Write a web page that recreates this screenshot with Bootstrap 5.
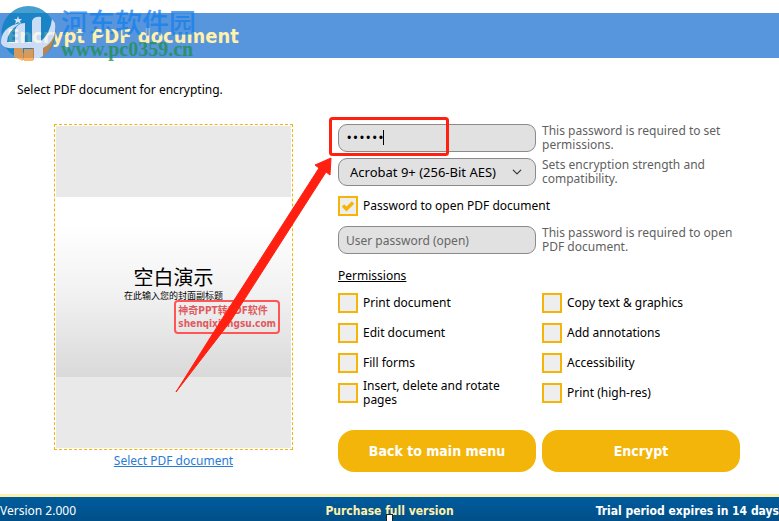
<!DOCTYPE html>
<html lang="en">
<head>
<meta charset="utf-8">
<meta name="viewport" content="width=device-width, initial-scale=1">
<title>Encrypt PDF document</title>
<link href="https://cdn.jsdelivr.net/npm/bootstrap@5.3.0/dist/css/bootstrap.min.css" rel="stylesheet">
<style>
body{font-family:"Noto Sans","Noto Sans CJK SC",sans-serif;font-size:12px;line-height:14px;color:#000;background:#fff}
.title-bar,.action,.stamp,.status .fw-bold,.field[type=password]:not(:placeholder-shown){font-family:"DejaVu Sans Condensed","DejaVu Sans","Noto Sans CJK SC",sans-serif;font-stretch:condensed}
.title-bar{margin-top:13px;height:45px;background:#5795dd;padding-left:7px}
.title-bar h1{font-size:20px;line-height:24px;font-weight:700;color:#fff0ab}
.watermark{left:0;top:-8px;opacity:.75}
.wm-cn{font:500 27px/34px "Noto Sans CJK SC",sans-serif;color:#1480ec}
.wm-url{font:700 20px/20px "Liberation Serif",serif;color:#1c9044}
.intro{padding:25px 17px 27px}
.workspace{display:grid;grid-template-columns:239fr 402fr;column-gap:45px;padding:0 39px 22px 54px}
.preview{border:1px dashed #f4b508;padding:1px;height:326px}
.preview-page{background:#e9e9e9}
.slide{height:180px;background:linear-gradient(#fff 15%,#f1f1f1 55%,#d9d9d9);font-family:"Noto Sans CJK SC",sans-serif}
.slide-title{font-size:20px;line-height:26px;padding-top:67px}
.slide-sub{font-size:9px;line-height:12px}
.stamp{right:12px;top:175px;border:2px solid #ff5555;border-radius:4px;color:#e05a60;font-size:10px;line-height:13px;font-weight:700;padding:2px;white-space:nowrap}
.pick{color:#2a7bd4}
.settings{display:grid;row-gap:6px;align-content:start}
.pair{display:grid;grid-template-columns:1fr 1fr;column-gap:6px}
.field{width:100%;height:28px;border:1px solid #8a8a8a;border-radius:9px;background-color:#e1e1e1;padding:0 7px;font-size:12px;line-height:14px;color:#000}
.field::placeholder{color:#666;opacity:1}
.field.form-select{padding-left:11px;font-size:13px;background-size:10px;background-position:right 13px center}
.hint{color:#5f5f5f}
.tick{appearance:none;flex:none;width:20px;height:20px;margin:0;border:2px solid #f4b508;background:#eee center/16px no-repeat}
.tick:checked{background-image:url("data:image/svg+xml,%3Csvg xmlns='http://www.w3.org/2000/svg' viewBox='0 0 16 16'%3E%3Cpath d='M3 7.500l3.500 3.500L13 4.500' fill='none' stroke='%23f4b508' stroke-width='3.500'/%3E%3C/svg%3E")}
.option{gap:5px;min-height:30px}
.open-option{min-height:28px}
.group-name{font-size:12px;line-height:14px;padding:9px 0 5px}
.actions{padding-top:16px}
.action{height:42px;border:0;border-radius:16px;background:#f4b50b;color:#fff;font-size:14px;font-weight:700}
.status{border-top:3px solid #fff0ab;background:linear-gradient(#005c9d,#004f88);color:#fff;height:27px;padding-top:7px;white-space:nowrap;display:grid;grid-template-columns:1fr auto 1fr}
.buy{color:#fff0ab}
.notes{left:0;top:0;pointer-events:none}
.handle{left:50%;bottom:0;margin-left:-4px;width:7px;height:7px;background:#fff;border:1px solid #222;border-bottom:0}
</style>
<script src="https://cdn.jsdelivr.net/npm/bootstrap@5.3.0/dist/js/bootstrap.bundle.min.js"></script>
</head>
<body>
<div class="d-flex flex-column min-vh-100 overflow-hidden">
<header class="title-bar d-flex align-items-center position-relative">
<h1 class="m-0">Encrypt PDF document</h1>
<div class="watermark position-absolute d-flex" aria-hidden="true">
<svg width="61" height="58" viewBox="0 0 61 58">
<circle cx="28.500" cy="28" r="27" fill="#087fc0"/>
<path d="M13 51Q43 44 55 21Q56 42 43 51Q28 59 13 51Z" fill="#d98022"/>
<path d="M1 38Q1 22 20 18Q7 27 7 37H15V25Q17 18 25 18V37H32V16Q34 11 41 12V36Q50 29 52 14L55 18Q57 36 43 43V51L34 56V43H23V55L14 51V43Q3 44 1 38Z" fill="#f2f6ff"/>
<path d="M14 43H23V56L14 52ZM24 44H33V56H24Z" fill="#ff9c32"/>
<path d="M18 11l1 3h3l-2 2 1 3-3-2-3 2 1-3-2-2h3z" fill="#fff"/>
</svg>
<div><div class="wm-cn">河东软件园</div><div class="wm-url">www.pc0359.cn</div></div>
</div>
</header>
<main class="flex-grow-1 position-relative">
<p class="intro m-0">Select PDF document for encrypting.</p>
<div class="workspace">
<section>
<div class="preview position-relative">
<div class="preview-page h-100 d-flex flex-column justify-content-center"><div class="slide text-center"><div class="slide-title">空白演示</div><div class="slide-sub">在此输入您的封面副标题</div></div></div>
<div class="stamp position-absolute">神奇PPT转PDF软件<br>shenqixiangsu.com</div>
</div>
<div class="text-center pt-1"><a class="pick" href="#">Select PDF document</a></div>
</section>
<form class="settings">
<div class="pair"><input class="field" type="password" value="secret" placeholder="Password" aria-label="Permissions password"><span class="hint">This password is required to set permissions.</span></div>
<div class="pair"><select class="field form-select" aria-label="Encryption strength"><option>Acrobat 9+ (256-Bit AES)</option></select><span class="hint">Sets encryption strength and compatibility.</span></div>
<div class="option open-option d-flex align-items-center"><input class="tick" type="checkbox" id="open" checked><label for="open">Password to open PDF document</label></div>
<div class="pair"><input class="field" type="password" placeholder="User password (open)" aria-label="User password"><span class="hint">This password is required to open PDF document.</span></div>
<fieldset>
<legend class="group-name m-0"><u>Permissions</u></legend>
<div class="pair">
<div class="option d-flex align-items-center"><input class="tick" type="checkbox" id="p1"><label for="p1">Print document</label></div>
<div class="option d-flex align-items-center"><input class="tick" type="checkbox" id="p2"><label for="p2">Copy text &amp; graphics</label></div>
<div class="option d-flex align-items-center"><input class="tick" type="checkbox" id="p3"><label for="p3">Edit document</label></div>
<div class="option d-flex align-items-center"><input class="tick" type="checkbox" id="p4"><label for="p4">Add annotations</label></div>
<div class="option d-flex align-items-center"><input class="tick" type="checkbox" id="p5"><label for="p5">Fill forms</label></div>
<div class="option d-flex align-items-center"><input class="tick" type="checkbox" id="p6"><label for="p6">Accessibility</label></div>
<div class="option d-flex align-items-center"><input class="tick" type="checkbox" id="p7"><label for="p7">Insert, delete and rotate pages</label></div>
<div class="option d-flex align-items-center"><input class="tick" type="checkbox" id="p8"><label for="p8">Print (high-res)</label></div>
</div>
</fieldset>
<div class="pair actions"><button class="action" type="button">Back to main menu</button><button class="action" type="submit">Encrypt</button></div>
</form>
</div>
<svg class="notes position-absolute" width="460" height="350" viewBox="0 58 460 350" aria-hidden="true">
<rect x="330.500" y="118.500" width="117" height="36" rx="2" fill="none" stroke="#ff2012" stroke-width="3"/>
<path d="M383.500 130V145" stroke="#000"/>
<path d="M331 158L315 165L319 168L222 319L176 392L230 322L326 172L330 175Z" fill="#ff2012" stroke="#ff2012" stroke-linejoin="round"/>
</svg>
</main>
<footer class="status position-relative">
<span>Version 2.000</span><span class="buy fw-bold">Purchase full version</span><span class="fw-bold text-end">Trial period expires in 14 days</span>
<span class="handle position-absolute"></span>
</footer>
</div>
</body>
</html>
